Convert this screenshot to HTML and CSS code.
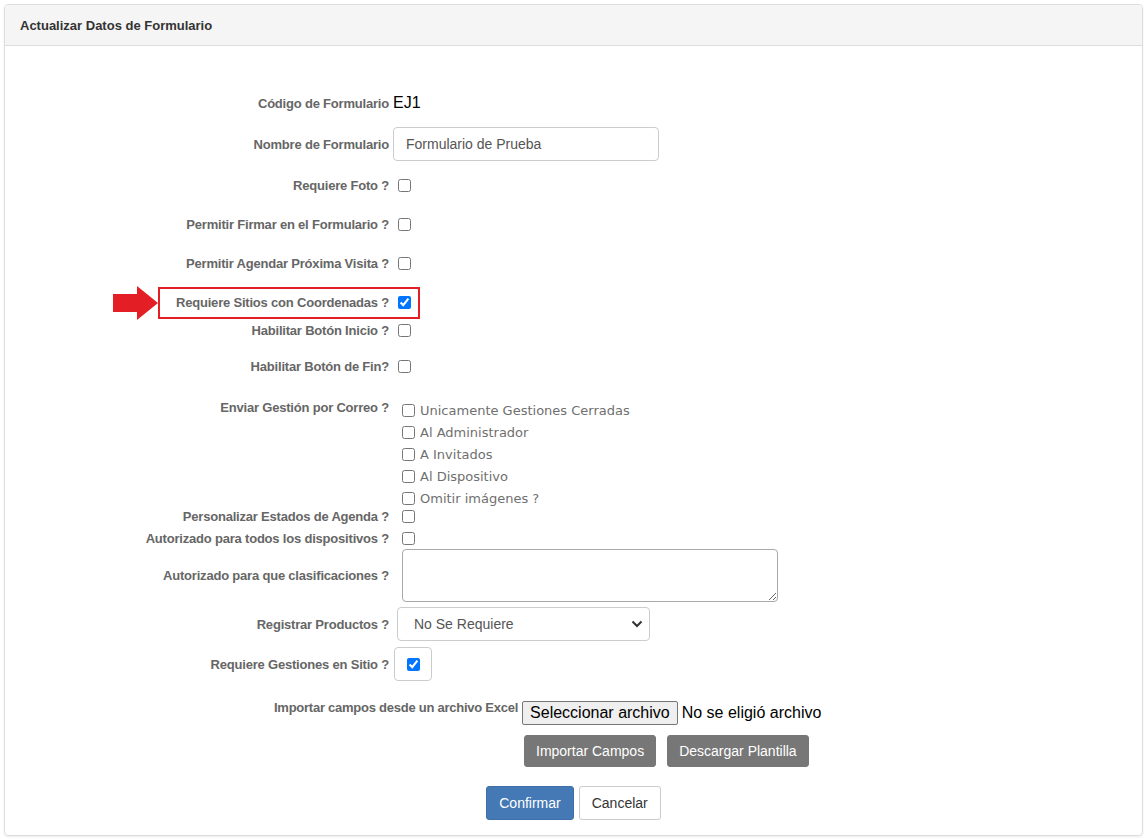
FILE: index.html
```html
<!DOCTYPE html>
<html lang="es">
<head>
<meta charset="utf-8">
<title>Actualizar Datos de Formulario</title>
<link rel="stylesheet" href="styles.css">
</head>
<body>
<div class="panel">
  <div class="panel-heading">Actualizar Datos de Formulario</div>
  <div class="panel-body">
    <div class="row r-codigo">
      <label class="lbl">Código de Formulario</label>
      <span class="code">EJ1</span>
    </div>
    <div class="row r-nombre">
      <label class="lbl">Nombre de Formulario</label>
      <input class="text-input" type="text" value="Formulario de Prueba">
    </div>
    <div class="row r-foto">
      <label class="lbl">Requiere Foto ?</label>
      <input class="chk" type="checkbox">
    </div>
    <div class="row r-std">
      <label class="lbl">Permitir Firmar en el Formulario ?</label>
      <input class="chk" type="checkbox">
    </div>
    <div class="row r-std">
      <label class="lbl">Permitir Agendar Próxima Visita ?</label>
      <input class="chk" type="checkbox">
    </div>
    <div class="row r-sitios">
      <svg class="arrow" width="45" height="34" viewBox="0 0 45 34"><path d="M0 8 H24 V0 L45 17 L24 34 V26 H0 Z" fill="#e31e25"/></svg>
      <div class="highlight"></div>
      <label class="lbl">Requiere Sitios con Coordenadas ?</label>
      <input class="chk" type="checkbox" checked>
    </div>
    <div class="row r-inicio">
      <label class="lbl">Habilitar Botón Inicio ?</label>
      <input class="chk" type="checkbox">
    </div>
    <div class="row r-fin">
      <label class="lbl">Habilitar Botón de Fin?</label>
      <input class="chk" type="checkbox">
    </div>
    <div class="row r-enviar">
      <label class="lbl lbl-top">Enviar Gestión por Correo ?</label>
      <div class="opt-list">
        <label class="opt"><input type="checkbox">Unicamente Gestiones Cerradas</label>
        <label class="opt"><input type="checkbox">Al Administrador</label>
        <label class="opt"><input type="checkbox">A Invitados</label>
        <label class="opt"><input type="checkbox">Al Dispositivo</label>
        <label class="opt"><input type="checkbox">Omitir imágenes ?</label>
      </div>
    </div>
    <div class="row r-small r-personalizar">
      <label class="lbl">Personalizar Estados de Agenda ?</label>
      <input class="chk chk-wide" type="checkbox">
    </div>
    <div class="row r-small r-todos">
      <label class="lbl">Autorizado para todos los dispositivos ?</label>
      <input class="chk chk-wide" type="checkbox">
    </div>
    <div class="row r-clasif">
      <label class="lbl">Autorizado para que clasificaciones ?</label>
      <textarea class="area"></textarea>
    </div>
    <div class="row r-productos">
      <label class="lbl">Registrar Productos ?</label>
      <span class="sel-wrap">
        <select class="sel"><option>No Se Requiere</option></select>
        <svg class="chev" width="12" height="8" viewBox="0 0 12 8"><path d="M1.5 1.5 L6 6 L10.5 1.5" fill="none" stroke="#333" stroke-width="2"/></svg>
      </span>
    </div>
    <div class="row r-gestiones">
      <label class="lbl">Requiere Gestiones en Sitio ?</label>
      <span class="addon"><input type="checkbox" checked></span>
    </div>
    <div class="row r-importar">
      <label class="lbl-import">Importar campos desde un archivo Excel</label>
      <span class="file-btn">Seleccionar archivo</span>
      <span class="file-name">No se eligió archivo</span>
    </div>
    <div class="row r-actions">
      <button class="btn btn-grey">Importar Campos</button>
      <button class="btn btn-grey">Descargar Plantilla</button>
    </div>
    <div class="row r-submit">
      <button class="btn btn-primary">Confirmar</button>
      <button class="btn btn-default">Cancelar</button>
    </div>
  </div>
</div>
</body>
</html>
```
FILE: styles.css
```css
html, body {
  margin: 0;
  padding: 0;
  background: #fff;
}
body {
  font-family: "Liberation Sans", Arial, sans-serif;
  font-size: 13px;
  color: #333;
}
.panel {
  margin: 4px;
  border: 1px solid #ddd;
  border-radius: 4px;
  box-shadow: 0 1px 2px rgba(0,0,0,0.08);
  height: 832px;
  box-sizing: border-box;
}
.panel-heading {
  height: 40px;
  background: #f5f5f5;
  border-bottom: 1px solid #ddd;
  border-radius: 3px 3px 0 0;
  padding-left: 15px;
  display: flex;
  align-items: center;
  font-weight: bold;
  font-size: 13px;
  color: #333;
}
.panel-body {
  display: flex;
  flex-direction: column;
}
.row {
  display: flex;
  align-items: center;
  height: 24px;
  position: relative;
}
.lbl {
  width: 384px;
  flex: none;
  text-align: right;
  font-weight: bold;
  color: #666;
  font-size: 13px;
  letter-spacing: -0.2px;
}
.code {
  margin-left: 4px;
  font-size: 16px;
  color: #000;
}
.r-codigo { margin-top: 45px; }
.r-nombre { height: 34px; margin-top: 12px; }
.r-foto { margin-top: 12px; }
.r-std { margin-top: 15px; }
.r-sitios { margin-top: 15px; }
.r-inicio { margin-top: 4px; }
.r-fin { margin-top: 12px; }
.text-input {
  margin-left: 4px;
  width: 266px;
  height: 34px;
  box-sizing: border-box;
  border: 1px solid #ccc;
  border-radius: 4px;
  padding: 0 12px;
  font-family: "Liberation Sans", Arial, sans-serif;
  font-size: 14px;
  color: #555;
  outline: none;
}
.chk {
  margin: 0 0 0 9px;
  width: 13px;
  height: 13px;
}
.chk-wide { margin-left: 13px; }
.arrow {
  position: absolute;
  left: 108px;
  top: -4px;
}
.highlight {
  position: absolute;
  left: 153px;
  top: -3px;
  width: 262px;
  height: 32px;
  box-sizing: border-box;
  border: 2px solid #e31e25;
}
.r-enviar {
  align-items: flex-start;
  height: auto;
  margin-top: 21px;
}
.lbl-top { line-height: 18px; }
.opt-list {
  margin-left: 13px;
  display: flex;
  flex-direction: column;
}
.opt {
  display: flex;
  align-items: center;
  height: 22px;
  font-family: "DejaVu Sans", Verdana, sans-serif;
  font-size: 13px;
  color: #6f6f6f;
}
.opt input {
  margin: 0 5px 0 0;
  width: 13px;
  height: 13px;
}
.r-small { height: 20px; }
.r-personalizar { margin-top: -3px; }
.r-todos { margin-top: 2px; }
.r-clasif { height: 53px; margin-top: 1px; }
.area {
  margin-left: 13px;
  width: 376px;
  height: 53px;
  box-sizing: border-box;
  border: 1px solid #a9a9a9;
  border-radius: 4px;
  padding: 4px;
  font-family: "Liberation Sans", Arial, sans-serif;
}
.r-productos { height: 34px; margin-top: 5px; }
.sel-wrap {
  position: relative;
  margin-left: 8px;
  display: flex;
}
.sel {
  width: 253px;
  height: 34px;
  box-sizing: border-box;
  border: 1px solid #ccc;
  border-radius: 4px;
  padding: 0 16px;
  background: #fff;
  font-family: "Liberation Sans", Arial, sans-serif;
  font-size: 14px;
  color: #555;
  appearance: none;
  -webkit-appearance: none;
}
.chev {
  position: absolute;
  right: 7px;
  top: 13px;
  pointer-events: none;
}
.r-gestiones { height: 34px; margin-top: 6px; }
.addon {
  margin-left: 5px;
  width: 38px;
  height: 34px;
  box-sizing: border-box;
  border: 1px solid #ccc;
  border-radius: 4px;
  display: flex;
  align-items: center;
  justify-content: center;
}
.addon input { margin: 0; width: 13px; height: 13px; }
.r-importar {
  align-items: flex-start;
  margin-top: 20px;
  padding-left: 269px;
  height: 24px;
}
.lbl-import {
  font-weight: bold;
  color: #666;
  font-size: 13px;
  letter-spacing: -0.25px;
  line-height: 14px;
  margin-right: 4px;
}
.file-btn {
  height: 24px;
  box-sizing: border-box;
  border: 1px solid #767676;
  border-radius: 2px;
  background: #efefef;
  padding: 0 7px;
  display: flex;
  align-items: center;
  font-size: 16px;
  color: #000;
}
.file-name {
  margin-left: 4px;
  font-size: 16px;
  color: #000;
  line-height: 24px;
}
.r-actions {
  height: 32px;
  margin-top: 10px;
  padding-left: 519px;
  gap: 11px;
}
.btn {
  height: 34px;
  box-sizing: border-box;
  border: 1px solid transparent;
  border-radius: 3px;
  font-family: "Liberation Sans", Arial, sans-serif;
  font-size: 14px;
  padding: 0 12px;
}
.btn-grey {
  height: 32px;
  padding: 0 11px;
  background: #777;
  border-color: #777;
  color: #fff;
}
.r-submit {
  height: 34px;
  margin-top: 19px;
  justify-content: center;
  gap: 5px;
}
.btn-primary {
  background: #4479b5;
  border-color: #3e6fa8;
  color: #fff;
}
.btn-default {
  background: #fff;
  border-color: #ccc;
  color: #333;
}
```
